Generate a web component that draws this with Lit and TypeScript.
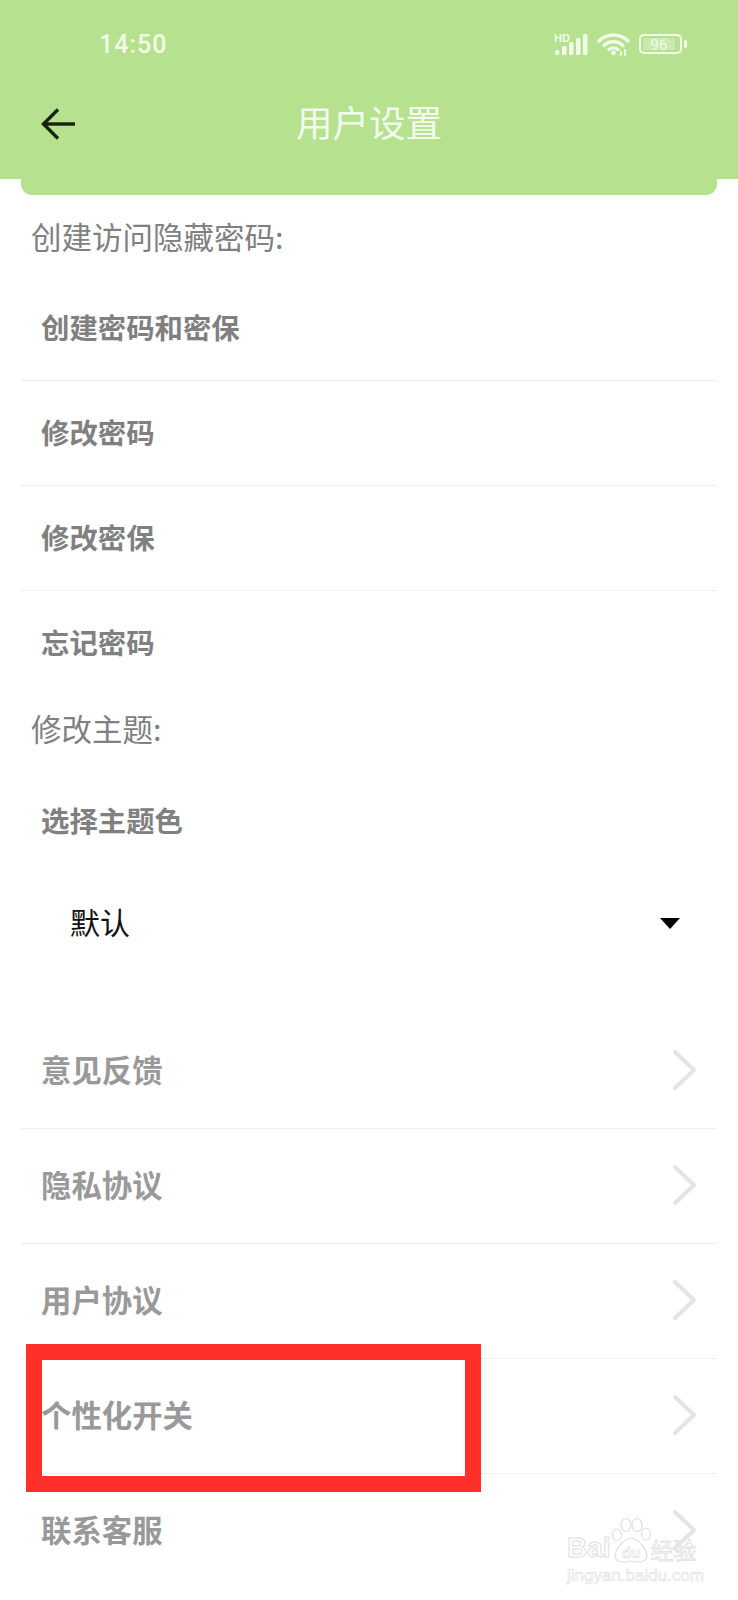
import { LitElement, html, css } from 'lit';
import { customElement } from 'lit/decorators.js';

const chevron = html`<svg class="chevron" width="26" height="42" viewBox="0 0 26 42"><path d="M3 3 L22 21 L3 39" fill="none" stroke="#e4e4e4" stroke-width="4" stroke-linecap="round" stroke-linejoin="round"/></svg>`;

@customElement('app-root')
export class AppRoot extends LitElement {
  static styles = css`
    :host {
      display: block;
      position: relative;
      width: 738px;
      height: 1600px;
      overflow: hidden;
      background: #fff;
      font-family: "Noto Sans CJK SC", "Noto Sans", sans-serif;
    }

    .top { background: #b6e18f; height: 179px; display: flex; flex-direction: column; }
    .tab { height: 16px; margin: 0 21px; background: #b6e18f; border-radius: 0 0 11px 11px; }

    .status { height: 88px; display: flex; align-items: center; padding: 0 51px 0 99px; color: #f2fae9; }
    .time { font: 500 25px/1 Roboto, sans-serif; letter-spacing: 1px; flex: 1; }
    .status-icons { display: flex; align-items: center; gap: 9px; }

    .bar { flex: 1; display: flex; align-items: center; padding: 0 0 18px 41px; position: relative; margin-top: -2px; }
    .title { position: absolute; left: 0; right: 0; top: 1px; text-align: center; font-size: 36.5px; line-height: 70px; color: #f4fbee; }

    .list { margin: 0 21px; }
    .label { margin: 12px 0 0; padding-left: 10px; font-size: 30.5px; font-weight: 400; line-height: 42px; color: #808080; }
    .first { margin: 20px 0 19px; }

    .row { display: flex; align-items: center; justify-content: space-between; padding-left: 20px; font-size: 28.4px; font-weight: 600; color: #808080; }
    .pw { height: 100px; padding-bottom: 4px; border-bottom: 1px solid #efefef; }
    .pw.end { border-bottom: none; }
    .theme { height: 66px; padding-bottom: 4px; margin-top: 37px; }
    .select { height: 80px; margin: 25px 0 53px; padding: 0 37px 0 49px; display: flex; align-items: center; justify-content: space-between; font-size: 30px; color: #111; }
    .caret { width: 0; height: 0; margin-top: 4px; border-left: 10.5px solid transparent; border-right: 10.5px solid transparent; border-top: 11px solid #000; }

    .link { height: 114px; padding-right: 19px; border-bottom: 1px solid #efefef; font-size: 30.4px; font-weight: 700; color: #999; }
    .link span { padding-bottom: 4px; }
    .link svg { margin-bottom: 2px; }
    .link.end { border-bottom: none; }

    .highlight { position: absolute; left: 26px; top: 1344px; width: 423px; height: 116px; border: 16px solid #ff3029; }

    .watermark { position: absolute; left: 567px; top: 1518px; width: 134px; }
    .mark-line { display: flex; align-items: flex-end; height: 46px; }
    .bai { font: 700 28px/32px "Liberation Sans", sans-serif; color: #fff; -webkit-text-stroke: 1px #e0e0e0; }
    .jy { font-size: 23px; line-height: 30px; color: #fff; -webkit-text-stroke: 0.8px #e0e0e0; }
    .domain { margin-top: 2px; font: 400 17px/20px "Liberation Sans", sans-serif; color: #fff; -webkit-text-stroke: 0.6px #e0e0e0; white-space: nowrap; }
  `;

  render() {
    const pw = ['创建密码和密保', '修改密码', '修改密保', '忘记密码'];
    const links = ['意见反馈', '隐私协议', '用户协议', '个性化开关', '联系客服'];
    return html`
      <div class="top">
        <div class="status">
          <span class="time">14:50</span>
          <div class="status-icons">
            <svg width="34" height="22" viewBox="0 0 34 22" fill="#f2fae9">
              <text x="0" y="8.5" font-size="11" font-weight="700" font-family="Liberation Sans">HD</text>
              <rect x="1" y="17" width="4.5" height="5" rx="2"/>
              <rect x="8" y="13" width="4.5" height="9" rx="1.5"/>
              <rect x="15" y="9" width="4.5" height="13" rx="1.5"/>
              <rect x="22" y="5" width="4.5" height="17" rx="1.5"/>
              <rect x="29" y="1" width="4.5" height="21" rx="1.5"/>
            </svg>
            <svg width="33" height="23" viewBox="0 0 33 23" fill="none" stroke="#f2fae9" stroke-width="3.4" stroke-linecap="round">
              <path d="M2 8 C10 0 23 0 31 8"/>
              <path d="M7 12.5 C12.5 7.5 20.5 7.5 26 12.5"/>
              <path d="M12 16.5 C14.5 14.5 18.5 14.5 21 16.5"/>
              <circle cx="16.5" cy="20" r="2.4" fill="#f2fae9" stroke="none"/>
              <path d="M24 22 v-3 M28 22 v-5" stroke-width="2"/>
            </svg>
            <svg width="48" height="20" viewBox="0 0 48 20">
              <rect x="1" y="1" width="41" height="18" rx="4" fill="none" stroke="#f2fae9" stroke-width="2"/>
              <rect x="4" y="4" width="32" height="12" rx="1.5" fill="#f2fae9" opacity="0.35"/>
              <text x="20" y="15.5" text-anchor="middle" font-size="15" font-family="Roboto" fill="#f2fae9">96</text>
              <rect x="45" y="6" width="3" height="8" rx="1.5" fill="#f2fae9"/>
            </svg>
          </div>
        </div>
        <div class="bar">
          <svg width="34" height="32" viewBox="0 0 34 32" fill="none" stroke="#14240c" stroke-width="3.4">
            <path d="M17 1.5 L2.5 16 L17 30.5"/>
            <path d="M3 16 H34"/>
          </svg>
          <div class="title">用户设置</div>
        </div>
      </div>
      <div class="tab"></div>

      <div class="list">
        <h2 class="label first">创建访问隐藏密码:</h2>
        ${pw.map((t, i) => html`<div class="row pw ${i === pw.length - 1 ? 'end' : ''}">${t}</div>`)}
        <h2 class="label">修改主题:</h2>
        <div class="row theme">选择主题色</div>
        <div class="select"><span>默认</span><span class="caret"></span></div>
        ${links.map((t, i) => html`<div class="row link ${i === links.length - 1 ? 'end' : ''}"><span>${t}</span>${chevron}</div>`)}
      </div>

      <div class="highlight"></div>

      <div class="watermark">
        <div class="mark-line">
          <span class="bai">Bai</span>
          <svg width="40" height="46" viewBox="0 0 40 46" fill="#fff" stroke="#e0e0e0" stroke-width="1.2">
            <ellipse cx="6" cy="17" rx="4.5" ry="6"/>
            <ellipse cx="15" cy="7" rx="5" ry="6.5"/>
            <ellipse cx="26" cy="7" rx="5" ry="6.5"/>
            <ellipse cx="35" cy="16" rx="4.5" ry="6"/>
            <path d="M20 20 C27 20 36 32 36 38 C36 44 28 45 20 43 C12 45 4 44 4 38 C4 32 13 20 20 20 Z"/>
            <text x="20" y="40" text-anchor="middle" font-size="15" font-weight="700" font-family="Liberation Sans" stroke-width="0.7">du</text>
          </svg>
          <span class="jy">经验</span>
        </div>
        <div class="domain">jingyan.baidu.com</div>
      </div>
    `;
  }
}
